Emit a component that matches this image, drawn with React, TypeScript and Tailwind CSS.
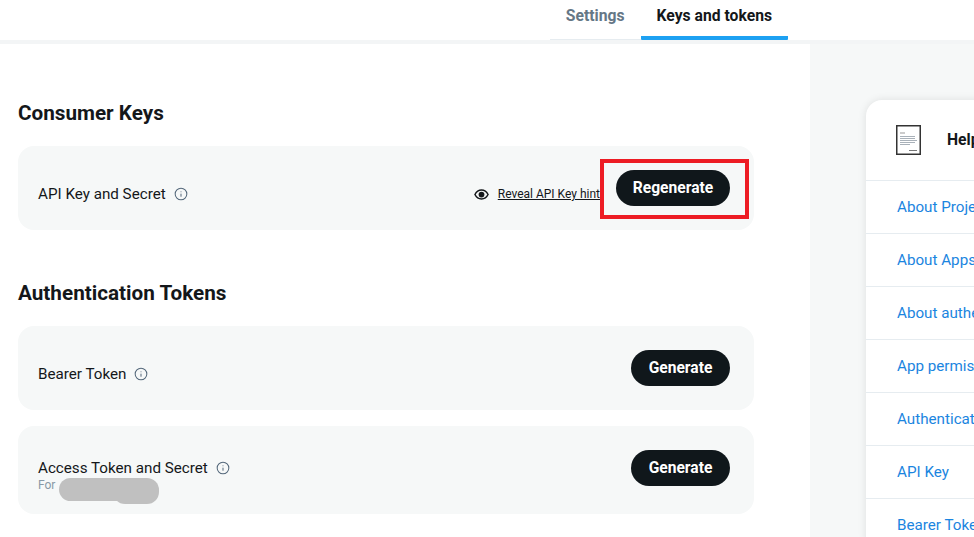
import { Info } from "lucide-react";

const helpLinks = [
  "About Projects",
  "About Apps",
  "About authentication",
  "App permissions",
  "Authentication",
  "API Key",
  "Bearer Token",
];

function Label({ text }: { text: string }) {
  return (
    <span className="flex items-center gap-[8px] text-[15.2px] leading-[20px] text-[#14171a]">
      {text}
      <Info className="size-[14px] text-[#53677a]" strokeWidth={1.75} />
    </span>
  );
}

function BlackButton({ text, wide }: { text: string; wide?: boolean }) {
  return (
    <button
      className={`flex h-[36px] items-center justify-center rounded-full bg-[#10171b] pt-[2px] text-[15.6px] font-bold text-white ${wide ? "w-[114px]" : "w-[99px]"}`}
    >
      {text}
    </button>
  );
}

function EyeIcon() {
  return (
    <svg width="15" height="15" viewBox="0 0 24 24" className="mr-[9px] shrink-0 text-[#14171a]">
      <path
        d="M1.5 12C4 7 7.7 4.8 12 4.8S20 7 22.5 12C20 17 16.3 19.2 12 19.2S4 17 1.5 12Z"
        fill="none"
        stroke="currentColor"
        strokeWidth="2.4"
      />
      <circle cx="12" cy="12" r="4.6" fill="currentColor" />
    </svg>
  );
}

function DocIcon() {
  return (
    <svg width="25" height="30" viewBox="0 0 25 30" className="shrink-0">
      <rect x="0.75" y="0.75" width="23.5" height="28.5" fill="#fff" stroke="#333" strokeWidth="1.5" />
      <path d="M4 8h5" stroke="#999" />
      <path d="M4 11.5h15M4 13.5h15M4 15.5h17M4 17.5h15M4 19.5h10" stroke="#a9b1b9" />
      <path d="M13 25.5h8" stroke="#777" />
    </svg>
  );
}

export default function App() {
  return (
    <div className="flex h-[537px] w-[974px] flex-col overflow-hidden bg-white font-['Roboto',sans-serif]">
      <div className="flex h-[44px] shrink-0 justify-end border-b-[4px] border-[#f3f5f6] pr-[186px]">
        <div className="flex h-[40px] items-start border-b-[1px] border-[#e6ecf0] px-[16px] pt-[6px] text-[15.7px] leading-[20px] font-bold text-[#657786]">
          Settings
        </div>
        <div className="h-[40px] rounded-b-[1px] border-b-[4px] border-[#1da1f2] px-[16px] pt-[6px] text-[15.7px] leading-[20px] font-bold text-[#14171a]">
          Keys and tokens
        </div>
      </div>

      <div className="flex min-h-0 flex-1">
        <main className="w-[810px] shrink-0 bg-white pt-[57px] pl-[18px]">
          <h2 className="text-[20.7px] leading-[24px] font-bold text-[#14171a]">Consumer Keys</h2>
          <div className="relative mt-[21px] flex h-[84px] w-[736px] items-center justify-between rounded-[16px] bg-[#f6f8f8] pr-[24px] pl-[20px]">
            <div className="mt-[12px]">
              <Label text="API Key and Secret" />
            </div>
            <div className="flex items-center">
              <div className="mt-[12px] flex items-center">
                <EyeIcon />
                <span className="mr-[16px] text-[12px] text-[#14171a] underline">Reveal API Key hint</span>
              </div>
              <BlackButton text="Regenerate" wide />
            </div>
            <div className="absolute top-[13px] left-[582px] h-[60px] w-[149px] border-[4px] border-[#ed1c24]" />
          </div>

          <h2 className="mt-[51px] text-[20.7px] leading-[24px] font-bold text-[#14171a]">
            Authentication Tokens
          </h2>
          <div className="mt-[21px] flex h-[84px] w-[736px] items-center justify-between rounded-[16px] bg-[#f6f8f8] pr-[24px] pl-[20px]">
            <div className="mt-[12px]">
              <Label text="Bearer Token" />
            </div>
            <BlackButton text="Generate" />
          </div>
          <div className="relative mt-[16px] flex h-[88px] w-[736px] items-center justify-between rounded-[16px] bg-[#f6f8f8] pr-[24px] pl-[20px]">
            <div className="mt-[10px]">
              <Label text="Access Token and Secret" />
              <div className="text-[12px] leading-[15px] text-[#8899a6]">For</div>
            </div>
            <div className="mb-[4px]">
              <BlackButton text="Generate" />
            </div>
            <div className="absolute top-[52px] left-[41px] h-[23px] w-[80px] rounded-full bg-[#c0c0c0]" />
            <div className="absolute top-[52px] left-[95px] h-[26px] w-[46px] rounded-[12px] bg-[#c0c0c0]" />
          </div>
        </main>

        <aside className="min-w-0 flex-1 bg-[#f6f8f8] pt-[56px] pl-[56px]">
          <div className="w-[300px] rounded-[16px] bg-white shadow-[0_0_8px_rgba(0,0,0,0.1)]">
            <div className="flex h-[81px] items-center gap-[26px] border-b border-[#e6ecf0] pl-[30px]">
              <DocIcon />
              <span className="text-[15.7px] font-bold text-[#14171a]">Helpful docs</span>
            </div>
            {helpLinks.map((link) => (
              <div
                key={link}
                className="flex h-[53px] items-center border-b border-[#e6ecf0] pl-[31px] text-[15.2px] whitespace-nowrap text-[#1b85e0]"
              >
                {link}
              </div>
            ))}
          </div>
        </aside>
      </div>
    </div>
  );
}
